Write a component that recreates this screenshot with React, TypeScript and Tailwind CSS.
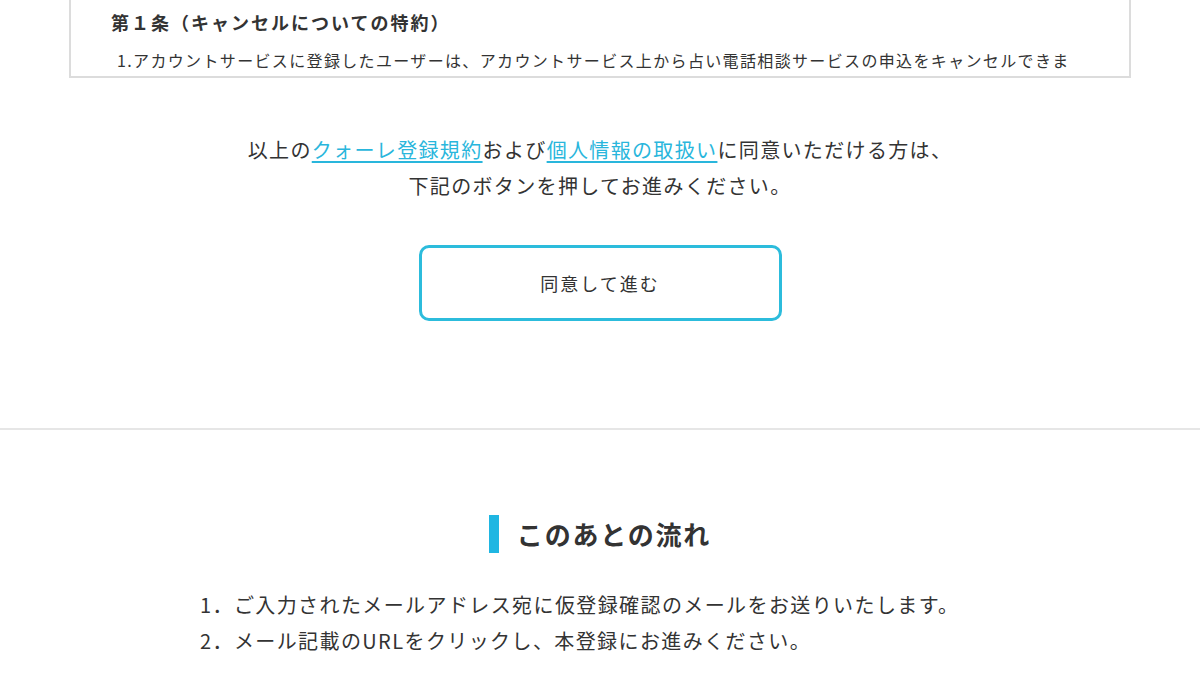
const font = { fontFamily: '"Noto Sans CJK JP", "Noto Sans", sans-serif' }

export default function App() {
  return (
    <div className="min-h-[675px] bg-white text-[#333]" style={font}>
      {/* 規約ボックス（スクロール済み） */}
      <div className="mx-[69px] h-[78px] overflow-hidden border-x-2 border-b-2 border-[#dcdcdc] pl-[40px] pr-[48px] pt-[9px]">
        <h3 className="text-[18px] font-bold leading-[26px] tracking-[2px] text-[#333]">第１条（キャンセルについての特約）</h3>
        <p className="mt-[13px] pl-[6px] text-[16px] leading-[24px] tracking-[1.35px] text-[#333]">
          1.アカウントサービスに登録したユーザーは、アカウントサービス上から占い電話相談サービスの申込をキャンセルできます。
        </p>
      </div>

      <div className="mt-[54px] text-center text-[20px] leading-[36px] tracking-[1.35px]">
        <p>
          以上の<a className="text-[#29b6dc] underline underline-offset-[3px]">クォーレ登録規約</a>および
          <a className="text-[#29b6dc] underline underline-offset-[3px]">個人情報の取扱い</a>に同意いただける方は、
        </p>
        <p>下記のボタンを押してお進みください。</p>
      </div>

      <div className="mt-[41px] flex justify-center">
        <button className="flex h-[76px] w-[363px] items-center justify-center rounded-[10px] border-[3px] border-[#2cbcdc] bg-white text-[18px] tracking-[2px] text-[#333]">
          同意して進む
        </button>
      </div>

      <div className="mt-[107px] h-[2px] bg-[#e6e6e6]" />

      <div className="mt-[84px] flex justify-center">
        <h2 className="flex items-center gap-[18px] text-[26px] font-bold tracking-[1.8px] text-[#333]">
          <span className="h-[38px] w-[10px] bg-[#1fb6e2]" />
          このあとの流れ
        </h2>
      </div>

      <ol className="mt-[34px] pl-[200px] text-[20px] leading-[36px] tracking-[1.4px]">
        <li>1．ご入力されたメールアドレス宛に仮登録確認のメールをお送りいたします。</li>
        <li>2．メール記載のURLをクリックし、本登録にお進みください。</li>
      </ol>
    </div>
  )
}
